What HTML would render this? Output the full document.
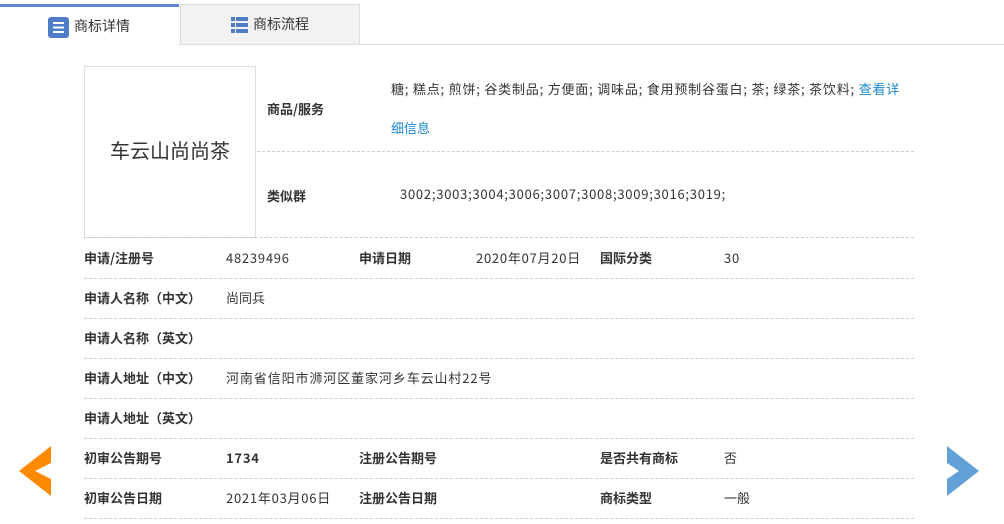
<!DOCTYPE html><html><head><meta charset="utf-8"><style>
body{margin:0;width:1004px;height:524px;background:#fff;position:relative;overflow:hidden;font-family:"Noto Sans CJK SC","Liberation Sans",sans-serif;font-size:13px;line-height:18px;color:#333}
.a{position:absolute;white-space:nowrap}
.b{font-weight:bold}
.n{letter-spacing:0.75px}
.l{position:absolute;left:84px;width:830px;border-top:1px dashed #ccc;height:0}
</style></head><body>
<div class="a" style="left:0;top:44px;width:1004px;border-top:1px solid #ddd"></div>
<div class="a" style="left:0;top:4px;width:179px;height:41px;background:#fff;border-top:3px solid #5b87cc"></div>
<div class="a" style="left:180px;top:4px;width:180px;height:40px;background:#f2f2f2;border:1px solid #ddd;border-bottom:none;box-sizing:border-box"></div>
<svg class="a" style="left:48px;top:17px" width="21" height="21"><rect x="0" y="0" width="21" height="21" rx="3" fill="#4f7cc7"/><rect x="5" y="5" width="11" height="2" fill="#fff"/><rect x="5" y="9.5" width="11" height="2" fill="#fff"/><rect x="5" y="14" width="11" height="2" fill="#fff"/></svg>
<div class="a" style="left:74px;top:17px;font-size:14px;color:#333">商标详情</div>
<svg class="a" style="left:231px;top:17px" width="17" height="17" fill="#4f7cc7"><rect x="0" y="0" width="4" height="4"/><rect x="5" y="0" width="12" height="4"/><rect x="0" y="6" width="4" height="4"/><rect x="5" y="6" width="12" height="4"/><rect x="0" y="12" width="4" height="4"/><rect x="5" y="12" width="12" height="4"/></svg>
<div class="a" style="left:253px;top:15px;font-size:14px;color:#333">商标流程</div>
<div class="a" style="left:84px;top:66px;width:172px;height:172px;border:1px solid #ddd;box-sizing:border-box"></div>
<div class="a" style="left:84px;top:137px;width:172px;text-align:center;font-size:20px;line-height:26px;color:#333">车云山尚尚茶</div>
<div class="a b" style="left:267px;top:100px">商品/服务</div>
<div class="a" style="left:391px;top:80px;letter-spacing:0.8px">糖; 糕点; 煎饼; 谷类制品; 方便面; 调味品; 食用预制谷蛋白; 茶; 绿茶; 茶饮料; <span style="color:#1a86d0">查看详</span></div>
<div class="a" style="left:391px;top:119px;color:#1a86d0">细信息</div>
<div class="l" style="left:257px;width:657px;top:151px"></div>
<div class="a b" style="left:267px;top:187px">类似群</div>
<div class="a n" style="left:400px;top:185px">3002;3003;3004;3006;3007;3008;3009;3016;3019;</div>
<div class="l" style="top:237px"></div>
<div class="a b" style="left:84px;top:249px">申请/注册号</div><div class="a n" style="left:226px;top:249px">48239496</div>
<div class="a b" style="left:359px;top:249px">申请日期</div><div class="a n" style="left:476px;top:249px">2020年07月20日</div>
<div class="a b" style="left:600px;top:249px">国际分类</div><div class="a n" style="left:724px;top:249px">30</div>
<div class="l" style="top:278px"></div>
<div class="a b" style="left:84px;top:289px">申请人名称（中文）</div><div class="a" style="left:226px;top:289px">尚同兵</div>
<div class="l" style="top:318px"></div>
<div class="a b" style="left:84px;top:329px">申请人名称（英文）</div>
<div class="l" style="top:358px"></div>
<div class="a b" style="left:84px;top:369px">申请人地址（中文）</div><div class="a" style="left:226px;top:369px;letter-spacing:0.9px">河南省信阳市浉河区董家河乡车云山村22号</div>
<div class="l" style="top:398px"></div>
<div class="a b" style="left:84px;top:409px">申请人地址（英文）</div>
<div class="l" style="top:438px"></div>
<div class="a b" style="left:84px;top:449px">初审公告期号</div><div class="a b n" style="left:226px;top:449px">1734</div>
<div class="a b" style="left:359px;top:449px">注册公告期号</div>
<div class="a b" style="left:600px;top:449px">是否共有商标</div><div class="a" style="left:724px;top:449px">否</div>
<div class="l" style="top:478px"></div>
<div class="a b" style="left:84px;top:489px">初审公告日期</div><div class="a n" style="left:226px;top:489px">2021年03月06日</div>
<div class="a b" style="left:359px;top:489px">注册公告日期</div>
<div class="a b" style="left:600px;top:489px">商标类型</div><div class="a" style="left:724px;top:489px">一般</div>
<div class="l" style="top:518px"></div>
<svg class="a" style="left:19px;top:446px" width="32" height="50"><polygon points="32,0 0,25 32,50 32,33 16,25 32,17" fill="#ff8a00"/></svg>
<svg class="a" style="left:947px;top:446px" width="32" height="50"><polygon points="0,0 32,25 0,50 0,33 12,25 0,17" fill="#62a0d8"/></svg>
</body></html>
